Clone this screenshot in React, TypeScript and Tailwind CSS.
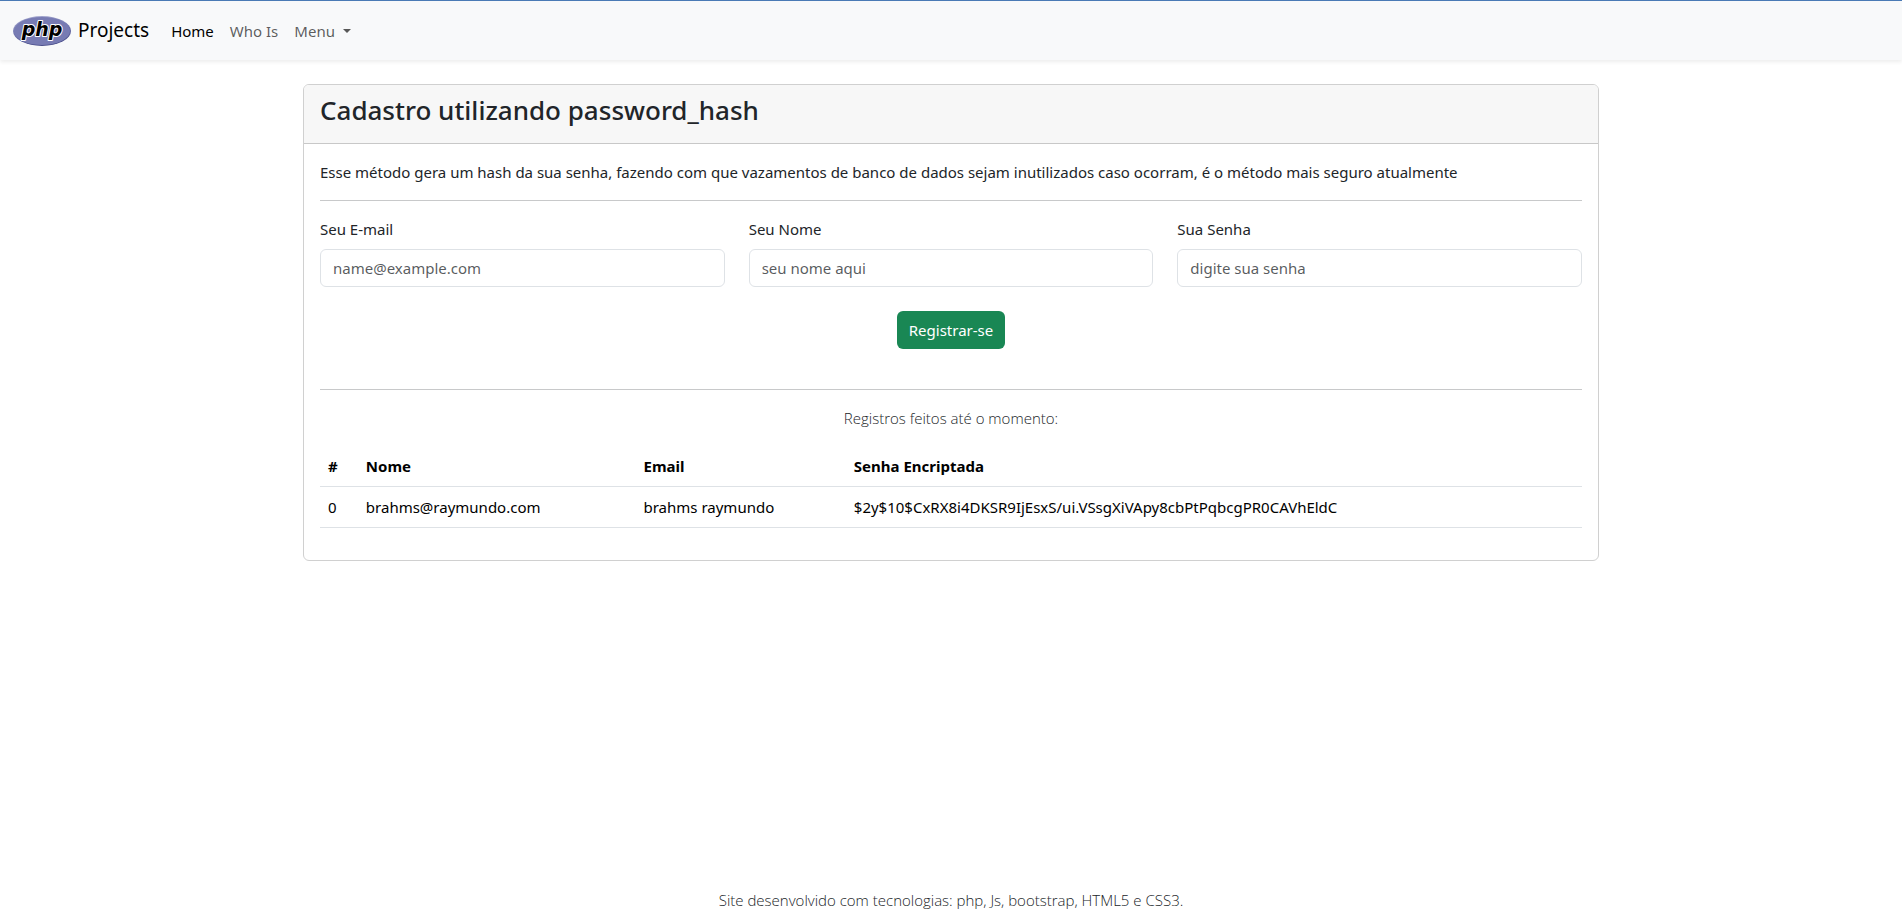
import { useState } from "react";

const fields = [
  { id: "email", label: "Seu E-mail", type: "email", placeholder: "name@example.com" },
  { id: "name", label: "Seu Nome", type: "text", placeholder: "seu nome aqui" },
  { id: "password", label: "Sua Senha", type: "password", placeholder: "digite sua senha" },
];

const records = [
  {
    name: "brahms@raymundo.com",
    email: "brahms raymundo",
    hash: "$2y$10$CxRX8i4DKSR9IjEsxS/ui.VSsgXiVApy8cbPtPqbcgPR0CAVhEldC",
  },
];

function PhpLogo() {
  return (
    <svg width="58" height="30" viewBox="0 0 58 30" role="img" aria-label="php" className="shrink-0">
      <defs>
        <linearGradient id="rim" x1="0" y1="0" x2="0.3" y2="1">
          <stop offset="0" stopColor="#b3b6d8" />
          <stop offset="0.5" stopColor="#777bb3" />
          <stop offset="1" stopColor="#484c89" />
        </linearGradient>
      </defs>
      <ellipse cx="29" cy="15" rx="29" ry="15" fill="url(#rim)" />
      <ellipse cx="29" cy="15" rx="28" ry="14" fill="#777bb3" />
      <text
        x="29"
        y="19.5"
        textAnchor="middle"
        fontFamily="'DejaVu Sans', sans-serif"
        fontWeight="700"
        fontStyle="italic"
        fontSize="19"
        fill="#000"
        stroke="#fff"
        strokeWidth="2"
        strokeLinejoin="round"
        paintOrder="stroke"
      >
        php
      </text>
    </svg>
  );
}

function Navbar() {
  return (
    <nav className="flex h-[60px] items-center border-t border-[#4a7ab5] bg-[#f8f9fa] px-[13px] shadow-[0_2px_4px_rgba(0,0,0,0.075)]">
      <a href="#" className="mr-[14px] flex items-center gap-[7px] text-[19px] leading-[30px] text-black">
        <PhpLogo />
        <span className="pb-0.5 leading-[28px]">Projects</span>
      </a>
      <ul className="flex pt-px text-black/65">
        <li>
          <a href="#" className="block p-2 text-black">Home</a>
        </li>
        <li>
          <a href="#" className="block p-2">Who Is</a>
        </li>
        <li>
          <button type="button" className="flex cursor-pointer items-center gap-2 p-2">
            Menu
            <svg width="8" height="4" viewBox="0 0 8 4" fill="currentColor" aria-hidden="true">
              <path d="M0 0h8L4 4z" />
            </svg>
          </button>
        </li>
      </ul>
    </nav>
  );
}

function RegisterForm() {
  const [values, setValues] = useState<Record<string, string>>({});
  return (
    <form onSubmit={(e) => e.preventDefault()}>
      <div className="grid grid-cols-1 gap-6 md:grid-cols-3">
        {fields.map((f) => (
          <div key={f.id}>
            <label htmlFor={f.id} className="mb-2 block">{f.label}</label>
            <input
              id={f.id}
              type={f.type}
              placeholder={f.placeholder}
              value={values[f.id] ?? ""}
              onChange={(e) => setValues({ ...values, [f.id]: e.target.value })}
              className="block h-[38px] w-full rounded-md border border-[#dee2e6] bg-white px-3 placeholder:text-[#212529]/75"
            />
          </div>
        ))}
      </div>
      <div className="mt-6 mb-10 flex justify-center">
        <button type="submit" className="h-[38px] cursor-pointer rounded-md bg-[#198754] px-3 text-white">
          Registrar-se
        </button>
      </div>
    </form>
  );
}

function RecordsTable() {
  return (
    <table className="mt-4 mb-4 w-full table-fixed text-left text-black">
      <thead>
        <tr className="border-b border-[#dee2e6]">
          <th scope="col" className="w-[3%] p-2">#</th>
          <th scope="col" className="w-[22%] p-2">Nome</th>
          <th scope="col" className="w-1/6 p-2">Email</th>
          <th scope="col" className="p-2">Senha Encriptada</th>
        </tr>
      </thead>
      <tbody>
        {records.map((r, i) => (
          <tr key={r.name} className="border-b border-[#dee2e6]">
            <td className="p-2">{i}</td>
            <td className="p-2">{r.name}</td>
            <td className="p-2">{r.email}</td>
            <td className="p-2 break-words">{r.hash}</td>
          </tr>
        ))}
      </tbody>
    </table>
  );
}

export default function App() {
  return (
    <div className="flex min-h-screen flex-col bg-white font-['Noto_Sans',sans-serif] text-[15px] leading-6 text-[#212529]">
      <Navbar />
      <main className="mx-auto mt-6 w-full max-w-[1320px] px-3">
        <section className="overflow-hidden rounded-md border border-[#d0d0d0]">
          <header className="border-b border-[#c8c8c8] bg-[#f7f7f7] px-4 pt-2 pb-4">
            <h1 className="text-[26px] leading-[34px] font-medium">
              Cadastro utilizando password_hash
            </h1>
          </header>
          <div className="p-4">
            <p>
              Esse método gera um hash da sua senha, fazendo com que vazamentos de banco de dados sejam inutilizados
              caso ocorram, é o método mais seguro atualmente
            </p>
            <hr className="my-4 border-[#c8c9ca]" />
            <RegisterForm />
            <hr className="mb-4 border-[#c8c9ca]" />
            <p className="text-center font-['Open_Sans',sans-serif] font-light">Registros feitos até o momento:</p>
            <RecordsTable />
          </div>
        </section>
      </main>
      <footer className="mt-auto pb-[5px] text-center font-['Open_Sans',sans-serif] font-light">
        Site desenvolvido com tecnologias: php, Js, bootstrap, HTML5 e CSS3.
      </footer>
    </div>
  );
}
